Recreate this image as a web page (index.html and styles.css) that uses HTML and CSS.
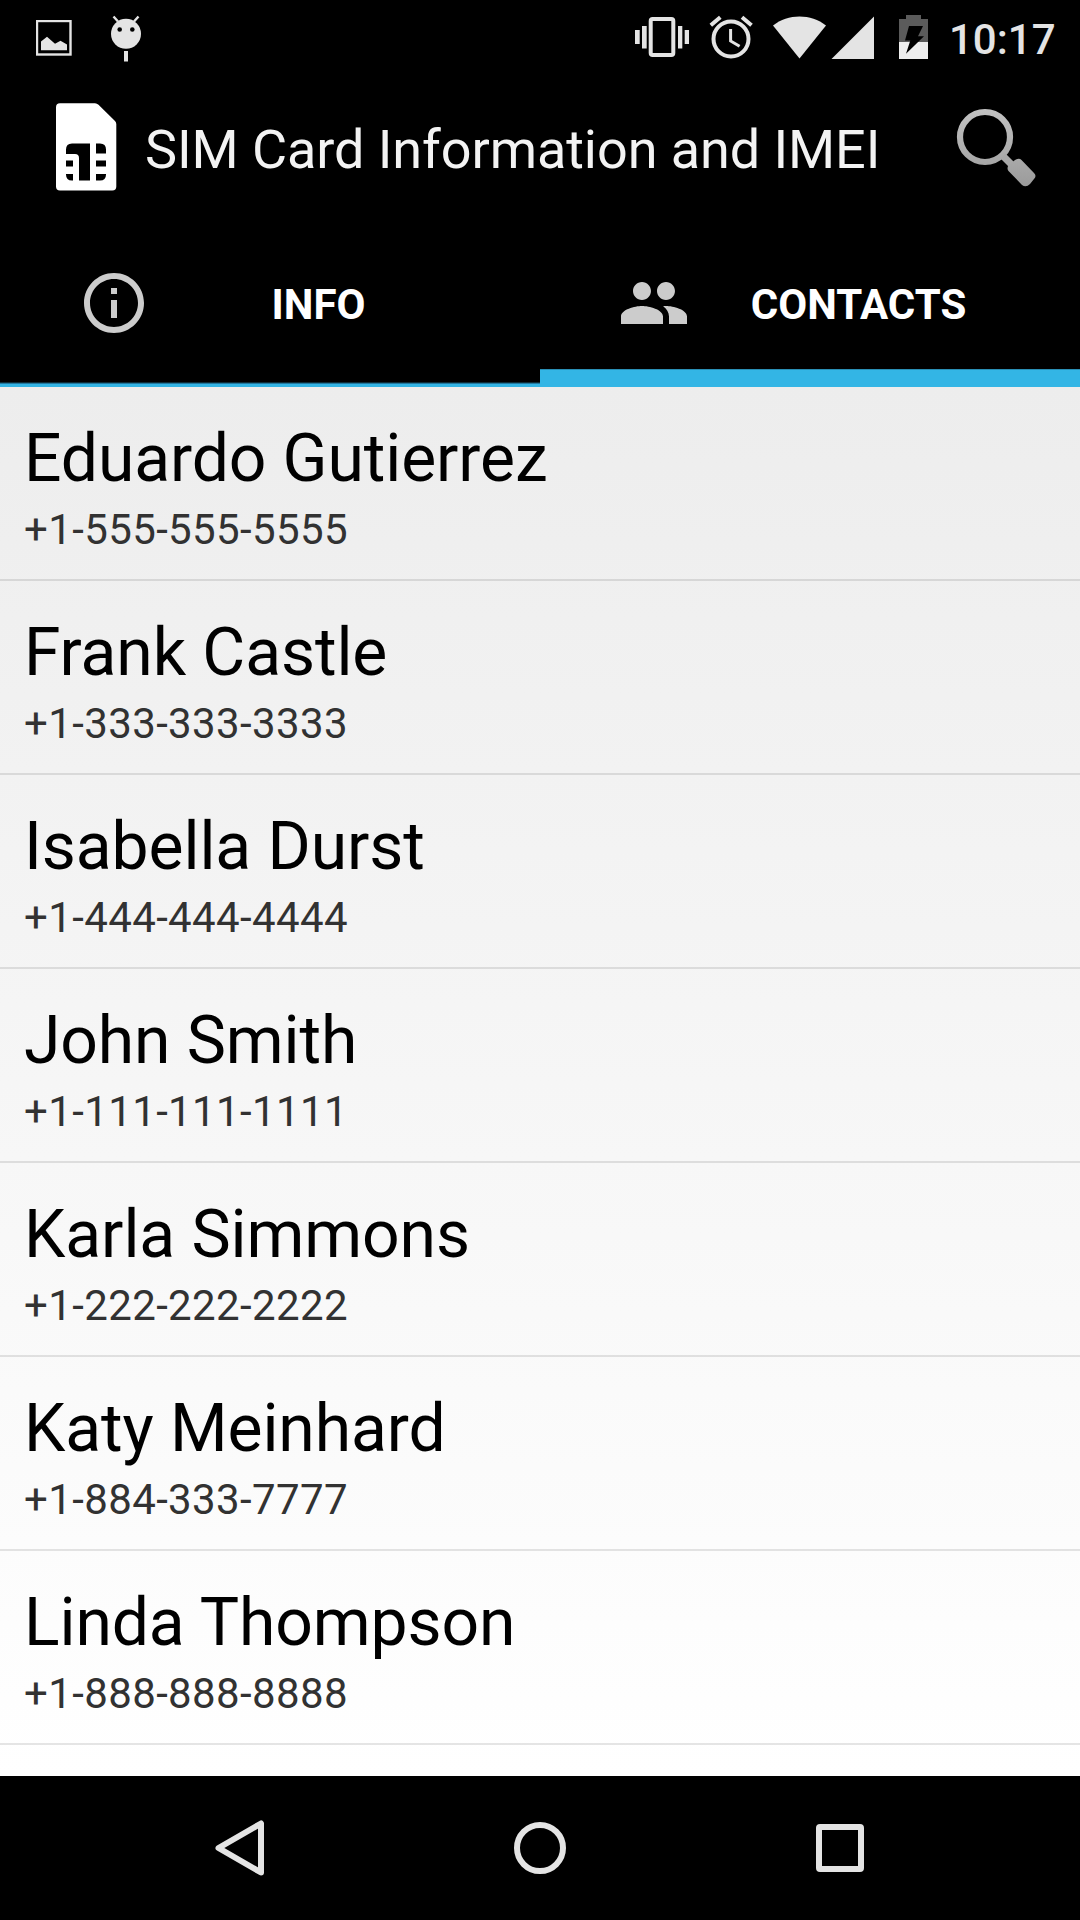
FILE: index.html
```html
<!DOCTYPE html>
<html lang="en">
<head>
<meta charset="utf-8">
<title>SIM Card Information and IMEI</title>
<link rel="stylesheet" href="styles.css">
</head>
<body>
<div class="screen">
  <header class="status">
    <div class="notifications">
      <svg class="picture" viewBox="0 0 36 36"><rect x="1" y="1" width="33.5" height="33.5" fill="none" stroke="#e4e4e4" stroke-width="2.4"/><path d="M5 21.5l6-4.8 8 7 5.500-3L31 24.500v5.700H5z" fill="#e4e4e4"/></svg>
      <svg class="android" viewBox="0 0 32 48"><path d="M3.500 1.500l4.500 5M28.500 1.500l-4.500 5" stroke="#e4e4e4" stroke-width="2.400"/><circle cx="16" cy="18.800" r="15" fill="#e4e4e4"/><circle cx="9.700" cy="14.500" r="2.300"/><circle cx="22.300" cy="14.500" r="2.300"/><path d="M14 36h4v10.500h-4z" fill="#e4e4e4"/></svg>
    </div>
    <svg class="system" viewBox="0 0 300 48" fill="#e4e4e4">
      <path d="M0 15h4.700v14H0zM7 11h4.700v22.500H7zM43 11h4.300v22.500H43zM49.700 15h4.300v14h-4.300z"/>
      <rect x="15.700" y="4" width="22.600" height="36" rx="2" fill="none" stroke="#e4e4e4" stroke-width="4"/>
      <g fill="none" stroke="#e4e4e4"><circle cx="96" cy="24" r="17.500" stroke-width="4"/><path d="M95.600 14v12l9 5.200" stroke-width="3"/><path d="M75.800 10.300l9.500-8M107 2.300l9.500 8" stroke-width="4"/></g>
      <path d="M138 10.500C153 -1.500 176 -1.500 191 10.500L164.500 43.500z"/>
      <path d="M239 1.500V44H196.500z"/>
      <path d="M264 4h7V0h15v4h7v23h-29z" fill="#5b5b5b"/><path d="M264 27h29v17h-29z" fill="#eee"/><path d="M274 11h14l-5 10.300h6L271 38.700l4.300-13.200H270z" fill="#000"/>
    </svg>
    <span class="clock">10:17</span>
  </header>
  <div class="actionbar">
    <svg class="sim" viewBox="0 0 60 88"><path d="M4 .3H39a5 5 0 0 1 3.500 1.500L58.500 17.500A5 5 0 0 1 60.300 21V83.500a4 4 0 0 1-4 4H4a4 4 0 0 1-4-4V4.300a4 4 0 0 1 4-4z" fill="#fff"/><path d="M16 40.500H34V77.500H23V55q0-4-4-4H10V46.500q0-6 6-6zM40 40.500h4q6 0 6 6V50.500H40zM10 57.500h7v6H10zM40 57.500H50v6H40zM10 71h7v6.500h-1q-6 0-6-6zM40 71H50v.5q0 6-6 6h-4z" fill="#000"/></svg>
    <h1 class="title">SIM Card Information and IMEI</h1>
    <svg class="search" viewBox="0 0 84 84"><defs><linearGradient id="metal" x1="0" y1="0" x2="0" y2="84" gradientUnits="userSpaceOnUse"><stop offset="0" stop-color="#c4c4c4"/><stop offset="1" stop-color="#999"/></linearGradient></defs><circle cx="30" cy="31" r="25" fill="none" stroke="url(#metal)" stroke-width="6.200"/><path d="M48 50l10 10" stroke="#a8a8a8" stroke-width="7"/><path d="M60 54q4-2.500 6.500 0L79 67q3 3 0 6l-4 5q-4 4-8 1L53.500 65q-2-3 0-5.500z" fill="url(#metal)"/></svg>
  </div>
  <nav class="tabs">
    <div class="tab">
      <svg class="tab-icon" viewBox="0 0 24 24"><path d="M11 17h2v-6h-2v6zm1-15C6.480 2 2 6.480 2 12s4.480 10 10 10 10-4.480 10-10S17.520 2 12 2zm0 18c-4.410 0-8-3.590-8-8s3.590-8 8-8 8 3.590 8 8-3.590 8-8 8zM11 9h2V7h-2v2z"/></svg>
      <span class="tab-label">INFO</span>
    </div>
    <div class="tab selected">
      <svg class="tab-icon" viewBox="0 0 24 24"><path d="M16 11c1.660 0 2.990-1.340 2.990-3S17.660 5 16 5s-3 1.340-3 3 1.340 3 3 3zm-8 0c1.660 0 2.990-1.340 2.990-3S9.660 5 8 5 5 6.340 5 8s1.340 3 3 3zm0 2c-2.330 0-7 1.170-7 3.500V19h14v-2.500c0-2.330-4.670-3.500-7-3.500zm8 0c-.29 0-.62.020-.97.050 1.160.84 1.970 1.970 1.970 3.450V19h6v-2.500c0-2.330-4.670-3.500-7-3.500z"/></svg>
      <span class="tab-label">CONTACTS</span>
    </div>
  </nav>
  <main class="contacts">
    <div class="contact"><div class="name">Eduardo Gutierrez</div><div class="phone">+1-555-555-5555</div></div>
    <div class="contact"><div class="name">Frank Castle</div><div class="phone">+1-333-333-3333</div></div>
    <div class="contact"><div class="name">Isabella Durst</div><div class="phone">+1-444-444-4444</div></div>
    <div class="contact"><div class="name">John Smith</div><div class="phone">+1-111-111-1111</div></div>
    <div class="contact"><div class="name">Karla Simmons</div><div class="phone">+1-222-222-2222</div></div>
    <div class="contact"><div class="name">Katy Meinhard</div><div class="phone">+1-884-333-7777</div></div>
    <div class="contact"><div class="name">Linda Thompson</div><div class="phone">+1-888-888-8888</div></div>
  </main>
  <footer class="navbar">
    <svg class="nav-icon" viewBox="0 0 60 60"><path d="M51 5.500V54.500L8.500 30z"/></svg>
    <svg class="nav-icon" viewBox="0 0 60 60"><circle cx="30" cy="30" r="23"/></svg>
    <svg class="nav-icon" viewBox="0 0 60 60"><rect x="9" y="9" width="42" height="42" rx="1"/></svg>
  </footer>
</div>
</body>
</html>
```
FILE: styles.css
```css
* { box-sizing: border-box; }
body { margin: 0; background: #000; font-family: Roboto, sans-serif; }
.screen { width: 1080px; height: 1920px; display: flex; flex-direction: column; overflow: hidden; background: #000; }
.status { height: 75px; display: flex; align-items: flex-start; padding: 15px 26px 0 36px; }
.notifications { flex: 1; display: flex; gap: 38px; }
.picture { width: 36px; height: 36px; margin-top: 5px; }
.android { width: 32px; height: 48px; }
.system { width: 300px; height: 48px; margin-right: 14px; }
.clock { width: 105px; padding-top: 1px; color: #e4e4e4; font-size: 42px; font-weight: 500; line-height: 48px; white-space: nowrap; }
.actionbar { height: 168px; display: flex; align-items: center; padding: 0 41px 0 56px; }
.sim { width: 60px; height: 88px; margin-right: 29px; margin-top: -24px; overflow: visible; }
.title { flex: 1; margin: -18px 0 0; color: #f3f3f3; font-size: 54px; line-height: 64px; font-weight: 400; letter-spacing: -0.08px; white-space: nowrap; }
.search { width: 84px; height: 84px; margin-top: -22px; }
.tabs { height: 144px; display: flex; }
.tab { flex: 1; display: flex; align-items: flex-start; padding: 24px 53px 0 78px; background: linear-gradient(#0c2e3a 0 1px, #2379a0 1px 2px, #33b5e5 2px) bottom / 100% 5px no-repeat; }
.tab.selected { background: linear-gradient(#298fb5 0 1px, #33b5e5 1px) bottom / 100% 18px no-repeat; }
.tab-icon { width: 72px; height: 72px; fill: #ccc; }
.tab-label { flex: 1; color: #fff; font-size: 42px; line-height: 76px; font-weight: 700; text-align: center; }
.contacts { height: 1389px; background: linear-gradient(#ededed, #fff); }
.contact { height: 194px; padding: 32px 24px 0; border-bottom: 2px solid rgba(0, 0, 0, 0.1); }
.name { color: #000; font-size: 66px; line-height: 80px; letter-spacing: -0.1px; }
.phone { color: #323232; font-size: 42px; line-height: 50px; margin-top: 6px; letter-spacing: 0.38px; }
.navbar { height: 144px; display: flex; justify-content: center; align-items: center; gap: 240px; }
.nav-icon { width: 60px; height: 60px; fill: none; stroke: #e4e4e4; stroke-width: 6; stroke-linejoin: round; }
```
